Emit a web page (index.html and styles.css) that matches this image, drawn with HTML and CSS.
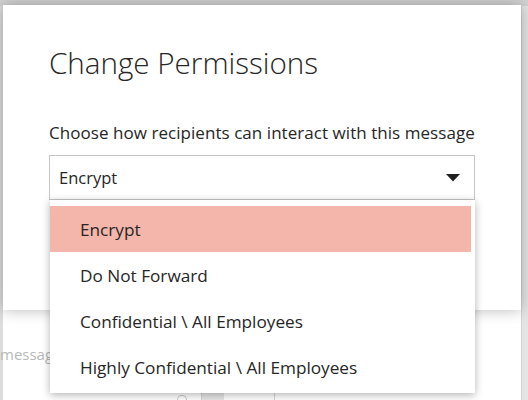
FILE: index.html
```html
<!DOCTYPE html>
<html lang="en">
<head>
<meta charset="utf-8">
<title>Change Permissions</title>
<link rel="stylesheet" href="styles.css">
</head>
<body>
<div class="app">
  <div class="app-top"></div>
  <div class="app-body">
    <div class="app-left"></div>
    <div class="app-main">
      <div class="app-preview">message</div>
      <div class="app-toolbar">
        <span class="tb-glyph"></span>
        <span class="tb-sep"></span>
        <span class="tb-btn"></span>
        <span class="tb-sep"></span>
      </div>
    </div>
    <div class="app-right"></div>
  </div>

  <div class="modal">
    <h1 class="modal-title">Change Permissions</h1>
    <p class="modal-text">Choose how recipients can interact with this message</p>
    <div class="select">
      <div class="select-box">
        <span class="select-value">Encrypt</span>
        <svg class="select-arrow" width="14" height="8" viewBox="0 0 14 8"><path d="M0 0H14L7 7.5Z" fill="#1f1f1f"/></svg>
      </div>
      <ul class="select-menu">
        <li class="option selected">Encrypt</li>
        <li class="option">Do Not Forward</li>
        <li class="option">Confidential \ All Employees</li>
        <li class="option">Highly Confidential \ All Employees</li>
      </ul>
    </div>
  </div>
</div>
</body>
</html>
```

FILE: styles.css
```css
* { box-sizing: border-box; }
html, body {
  margin: 0;
  padding: 0;
}
body {
  width: 528px;
  height: 400px;
  overflow: hidden;
  background: #ffffff;
  font-family: "Open Sans", "Noto Sans", sans-serif;
  color: #262626;
}
.app {
  position: relative;
  width: 528px;
  height: 400px;
  display: flex;
  flex-direction: column;
}
.app-top {
  height: 6px;
  background: #d2d2d2;
  flex: none;
}
.app-body {
  flex: 1;
  display: flex;
}
.app-left {
  width: 3px;
  background: #dcdcdc;
}
.app-main {
  flex: 1;
  display: flex;
  flex-direction: column;
  justify-content: flex-end;
}
.app-preview {
  font-size: 15px;
  color: #b8b8b8;
  margin-left: -3px;
  margin-bottom: 28px;
}
.app-toolbar {
  height: 8px;
  display: flex;
  align-items: flex-end;
  padding-left: 174px;
}
.tb-glyph {
  width: 10px;
  height: 5px;
  border: 1.5px solid #c9c9c9;
  border-bottom: none;
  border-radius: 5px 5px 0 0;
  margin-right: 14px;
}
.tb-sep {
  width: 1px;
  height: 8px;
  background: #d4d4d4;
}
.tb-btn {
  width: 22px;
  height: 8px;
  background: #e6e6e6;
  margin-right: 50px;
}
.app-right {
  width: 7px;
  background: #e4e4e4;
  border-left: 1px solid #d2d2d2;
}

.modal {
  position: absolute;
  left: 3px;
  top: 5px;
  width: 518px;
  height: 305px;
  background: #ffffff;
  box-shadow: 0 0 14px rgba(0, 0, 0, 0.28);
  padding: 37px 46px 0 46px;
}
.modal-title {
  margin: 0;
  font-weight: 300;
  font-size: 29.6px;
  line-height: 42px;
  color: #262626;
}
.modal-text {
  margin: 37px 0 0 0;
  font-size: 17px;
  line-height: 23px;
  letter-spacing: 0.05px;
  color: #262626;
}
.select {
  position: relative;
  margin-top: 11px;
  width: 426px;
}
.select-box {
  height: 45px;
  border: 1px solid #c6c6c6;
  display: flex;
  align-items: center;
  justify-content: space-between;
  padding: 0 14px 0 9px;
}
.select-value {
  font-size: 16.5px;
}
.select-arrow {
  display: block;
}
.select-menu {
  position: absolute;
  left: 1px;
  top: 45px;
  width: 425px;
  margin: 0;
  padding: 6px 4px 3px 0;
  list-style: none;
  background: #ffffff;
  box-shadow: 0 2px 8px rgba(0, 0, 0, 0.3);
}
.option {
  height: 46px;
  display: flex;
  align-items: center;
  padding-left: 30px;
  font-size: 17.2px;
  color: #262626;
}
.option.selected {
  background: #f4b5aa;
}
```
